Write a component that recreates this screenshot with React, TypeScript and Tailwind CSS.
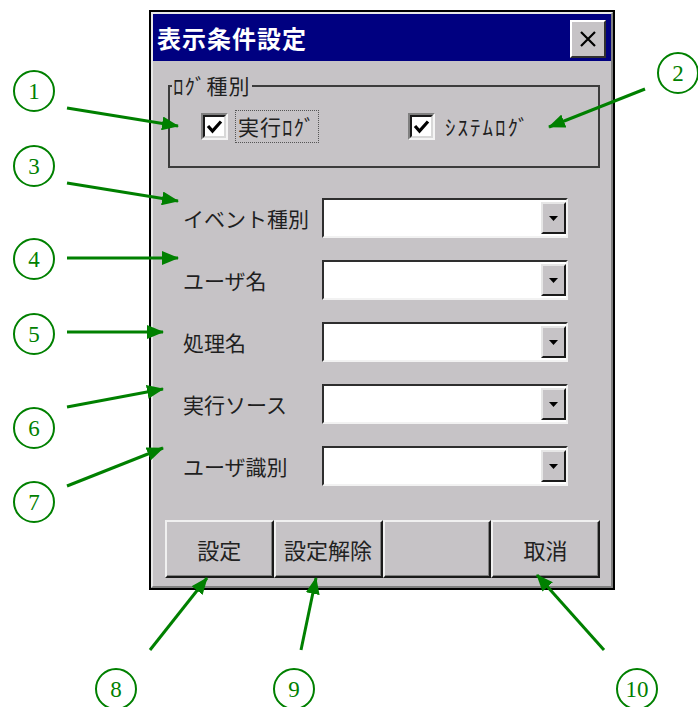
import React from 'react';

const jp = "font-['Noto_Sans_CJK_JP',sans-serif]";

const circles = [
  { n: '1', pos: 'left-[13px] top-[70px]' },
  { n: '2', pos: 'left-[657px] top-[52px]' },
  { n: '3', pos: 'left-[13px] top-[145px]' },
  { n: '4', pos: 'left-[13px] top-[238px]' },
  { n: '5', pos: 'left-[13px] top-[313px]' },
  { n: '6', pos: 'left-[13px] top-[407px]' },
  { n: '7', pos: 'left-[13px] top-[481px]' },
  { n: '8', pos: 'left-[95px] top-[668px]' },
  { n: '9', pos: 'left-[273px] top-[668px]' },
  { n: '10', pos: 'left-[616px] top-[668px]' },
];

const arrows = [
  [67, 108, 178, 126],
  [645, 89, 549, 127],
  [67, 183, 178, 201],
  [67, 258, 178, 258],
  [67, 332, 163, 332],
  [67, 407, 163, 389],
  [67, 486, 163, 448],
  [150, 650, 207, 578],
  [301, 650, 316, 578],
  [604, 650, 537, 575],
];

const fields = ['イベント種別', 'ユーザ名', '処理名', '実行ソース', 'ユーザ識別'];

function CheckBox() {
  return (
    <span className="flex h-[27px] w-[27px] border-2 border-t-[#808080] border-l-[#808080] border-r-[#f4f4f4] border-b-[#f4f4f4]">
      <span className="flex flex-1 items-center justify-center border-2 border-t-[#1a1a1a] border-l-[#1a1a1a] border-r-[#d8d8d8] border-b-[#d8d8d8] bg-white">
        <svg width="19" height="19" viewBox="0 0 19 19">
          <path d="M3 9 L7.5 14 L16 4.5" fill="none" stroke="#000" strokeWidth="3.2" />
        </svg>
      </span>
    </span>
  );
}

function Combo() {
  return (
    <div className="flex h-[40px] w-[246px] justify-end border-2 border-t-[#2e2e2e] border-l-[#2e2e2e] border-r-[#f2f2f2] border-b-[#f2f2f2] bg-white pt-[2px] pb-[2px]">
      <div className="flex w-[25px] items-center justify-center border-2 border-t-[#e6e6e6] border-l-[#e6e6e6] border-r-[#1a1a1a] border-b-[#1a1a1a] bg-[#c6c3c6]">
        <svg width="9" height="5" viewBox="0 0 9 5">
          <path d="M0 0 H9 L4.5 5 Z" fill="#000" />
        </svg>
      </div>
    </div>
  );
}

export default function App() {
  return (
    <div className="relative h-[707px] w-[698px] overflow-hidden bg-white pl-[149px] pt-[10px]">
      {/* Dialog window */}
      <div className={`flex h-[580px] w-[466px] flex-col border-2 border-black ${jp}`}>
        <div className="flex flex-1 flex-col border-2 border-t-[#e8e8e8] border-l-[#e8e8e8] border-r-[#808080] border-b-[#808080] bg-[#c6c3c6]">
          {/* Title bar */}
          <div className="flex h-[47px] items-start justify-between bg-[#000080] pl-[4px] pr-[5px]">
            <span className="mt-[10px] text-[24px] font-bold leading-[28px] tracking-[1px] text-white">
              表示条件設定
            </span>
            <div className="mt-[6px] flex h-[38px] w-[36px] items-center justify-center border-2 border-t-white border-l-white border-r-[#303030] border-b-[#303030] bg-[#c6c3c6]">
              <svg width="18" height="18" viewBox="0 0 18 18">
                <path d="M2 2 L16 16 M16 2 L2 16" stroke="#000" strokeWidth="2.2" />
              </svg>
            </div>
          </div>

          {/* Log type group */}
          <div className="relative ml-[15px] mr-[11px] mt-[24px] flex h-[83px] items-center border-2 border-[#3c3c3c] pl-[31px]">
            <span className="absolute left-[2px] top-[-14px] bg-[#c6c3c6] px-[1px] text-[21px] leading-[24px] tracking-[1px] text-[#1f1f1f]">
              ﾛｸﾞ種別
            </span>
            <div className="flex w-[207px] items-center gap-[7px]">
              <CheckBox />
              <span className="flex h-[33px] items-center border border-dotted border-[#555] px-[2px] text-[21px] tracking-[1px] text-[#1f1f1f]">
                実行ﾛｸﾞ
              </span>
            </div>
            <div className="flex items-center gap-[10px]">
              <CheckBox />
              <span className="text-[21px] tracking-[2px] text-[#1f1f1f]">ｼｽﾃﾑﾛｸﾞ</span>
            </div>
          </div>

          {/* Filter fields */}
          <div className="mt-[30px] flex flex-col gap-[22px] pl-[30px]">
            {fields.map((f) => (
              <div key={f} className="grid grid-cols-[139px_246px] items-center">
                <span className="text-[21px] leading-none text-[#1f1f1f]">{f}</span>
                <Combo />
              </div>
            ))}
          </div>

          {/* Buttons */}
          <div className="ml-[12px] mr-[11px] mt-[34px] grid h-[58px] grid-cols-4">
            {['設定', '設定解除', '', '取消'].map((b, i) => (
              <div
                key={i}
                className="flex items-center justify-center border-2 border-t-[#f0f0f0] border-l-[#f0f0f0] border-r-[#1a1a1a] border-b-[#1a1a1a] text-[22px] text-[#222] shadow-[inset_-1px_-1px_0_#808080]"
              >
                {b}
              </div>
            ))}
          </div>
        </div>
      </div>

      {/* Annotation arrows */}
      <svg className="pointer-events-none absolute inset-0" width="698" height="707">
        <defs>
          <marker id="ah" markerUnits="userSpaceOnUse" markerWidth="17" markerHeight="14" refX="16" refY="7" orient="auto">
            <path d="M0 0 L17 7 L0 14 Z" fill="#008000" />
          </marker>
        </defs>
        {arrows.map(([x1, y1, x2, y2], i) => (
          <line key={i} x1={x1} y1={y1} x2={x2} y2={y2} stroke="#008000" strokeWidth="3" markerEnd="url(#ah)" />
        ))}
      </svg>

      {/* Annotation numbers */}
      {circles.map((c) => (
        <div
          key={c.n}
          className={`absolute ${c.pos} flex h-[42px] w-[42px] items-center justify-center rounded-full border-2 border-[#008000] font-['Liberation_Serif',serif] text-[23px] leading-none text-[#008000]`}
        >
          {c.n}
        </div>
      ))}
    </div>
  );
}
